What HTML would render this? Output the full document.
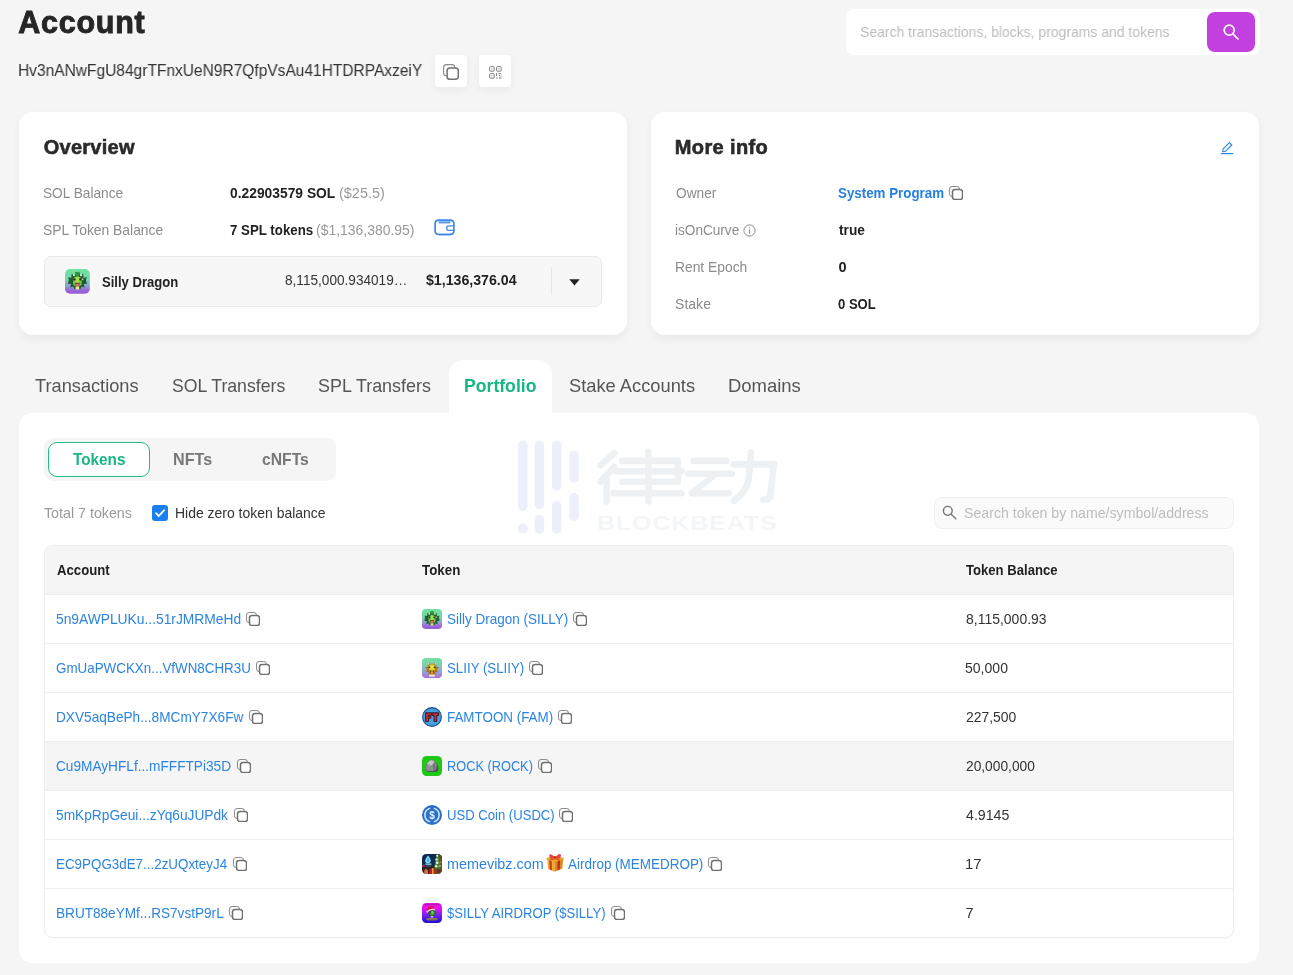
<!DOCTYPE html>
<html><head><meta charset="utf-8"><title>Account</title>
<style>
*{box-sizing:border-box;margin:0;padding:0}
html,body{width:1293px;height:975px;overflow:hidden;background:#f5f5f5}
body{position:relative;font-family:"Liberation Sans",sans-serif}
.a{position:absolute}
.t{position:absolute;white-space:nowrap;line-height:1;transform-origin:0 0}
.card{position:absolute;background:#fff;border-radius:14px;box-shadow:0 4px 9px rgba(0,0,0,.05),0 0 3px rgba(0,0,0,.025)}
.ibtn{position:absolute;width:31.6px;height:31.6px;background:#fff;border-radius:4px;box-shadow:0 3px 8px rgba(0,0,0,.05)}
.sep{position:absolute;left:45px;width:1188px;height:1px;background:#eeeeee}
.ic{position:absolute;width:20px;height:20px}
#w{position:absolute;left:0;top:0;width:1293px;height:975px;will-change:transform}
</style></head><body><div id="w">
<div class="a" style="left:846px;top:9px;width:414px;height:45.5px;background:#fff;border-radius:8px"></div>
<div class="a" style="left:1206.6px;top:11.8px;width:48.6px;height:40.2px;background:#c23fe0;border-radius:8px"></div>
<svg class="a" style="left:1221px;top:22px" width="20" height="20" viewBox="0 0 20 20" fill="none" stroke="#fff" stroke-width="1.7" stroke-linecap="round"><circle cx="8.2" cy="8.2" r="5"/><path d="M12 12 L17 17"/></svg>
<div class="ibtn" style="left:435.3px;top:55px"></div>
<div class="ibtn" style="left:479.4px;top:55px"></div>
<svg class="a" style="left:443px;top:63.9px" width="16" height="16" viewBox="0 0 16 16" fill="none"><rect x="0.6" y="0.6" width="11.2" height="11.2" rx="2.8" stroke="#8a8a8a" stroke-width="1.1"/><rect x="4.1" y="4.1" width="11.2" height="11.2" rx="2.8" fill="#fff" stroke="#707070" stroke-width="1.5"/></svg>
<svg class="a" style="left:488.6px;top:65.8px" width="13" height="13" viewBox="0 0 13 13" fill="none" stroke="#7a7a7a" stroke-width="1"><rect x="0.6" y="0.6" width="4.6" height="4.6" rx="0.8"/><rect x="7.6" y="0.6" width="4.6" height="4.6" rx="0.8"/><rect x="0.6" y="7.6" width="4.6" height="4.6" rx="0.8"/><rect x="2.4" y="2.4" width="1" height="1" fill="#7a7a7a" stroke="none"/><rect x="9.4" y="2.4" width="1" height="1" fill="#7a7a7a" stroke="none"/><rect x="2.4" y="9.4" width="1" height="1" fill="#7a7a7a" stroke="none"/><path d="M7.6 7.2 V10 M9.6 7.6 H12.2 M9.8 9.6 H11 M12 9.4 V10.6 M7.2 12 H8.6 M10 12 H12.4"/></svg>

<div class="card" style="left:19.3px;top:111.8px;width:607.8px;height:222.8px"></div>
<div class="card" style="left:650.8px;top:111.8px;width:608.2px;height:222.8px"></div>
<div class="a" style="left:44px;top:256.3px;width:557.7px;height:50.7px;background:#f7f7f7;border:1px solid #e9e9e9;border-radius:7px"></div>
<div class="a" style="left:551px;top:267px;width:1px;height:28px;background:#e6e6e6"></div>
<svg class="a" style="left:568.5px;top:278.6px" width="11" height="7" viewBox="0 0 11 7"><path d="M0.3 0.3 L10.7 0.3 L5.5 6.5 Z" fill="#222"/></svg>
<svg class="a" style="left:65.1px;top:269px" width="24.8" height="24.8" viewBox="0 0 20 20"><rect width="20" height="20" rx="4" fill="url(#gd1)"/><g transform="translate(0,-0.6)"><path d="M3.2 9.5 L2.6 7 L5 7.8 L5.4 4.4 L7.6 6 L8.6 2.8 L10 3.6 L11.4 2.8 L12.4 6 L14.6 4.4 L15 7.8 L17.6 7 L16.8 9.5 L17.8 12.4 L15.2 12.6 L15.8 15.6 L13.2 14.8 L12.6 16.8 L10 16.2 L7.4 16.8 L6.8 14.8 L4.2 15.6 L4.8 12.6 L2.2 12.4 Z" fill="#235a34"/><ellipse cx="10" cy="4.6" rx="2" ry="1.7" fill="#2f9a3c"/><path d="M6.4 8.4 Q10 4.6 13.6 8.4 L13.4 13.4 Q10 16.4 6.6 13.4 Z" fill="#6cc93c"/><ellipse cx="10" cy="9.4" rx="1.8" ry="2.6" fill="#a6e044"/><circle cx="7.2" cy="5.6" r="0.8" fill="#eef5e0"/><circle cx="12.9" cy="5.6" r="0.8" fill="#eef5e0"/><circle cx="7.6" cy="9" r="0.95" fill="#16321e"/><circle cx="12.4" cy="9" r="0.95" fill="#16321e"/><circle cx="14.3" cy="8.8" r="0.6" fill="#e6f2e0"/><path d="M8.2 11.6 H11.8 L11.4 14.4 H8.6 Z" fill="#8c2f3a"/><path d="M8.8 12.6 H11.2 L11 14.6 H9 Z" fill="#d4707a"/><rect x="8.6" y="14.8" width="2.8" height="2.4" rx="0.6" fill="#e8e68c"/></g></svg>
<svg class="a" style="left:433.6px;top:218.6px" width="21" height="17" viewBox="0 0 21 17" fill="none" stroke="#3f88e6" stroke-width="1.4"><rect x="1.2" y="1.2" width="18.6" height="14.3" rx="3.4" fill="#fff"/><rect x="4.6" y="1.6" width="11.6" height="1.6" fill="#86bcfa" stroke="none"/><path d="M4.6 3.8 H16.4" stroke="#2f78d6" stroke-width="1.1"/><path d="M19.8 6.9 H14.4 Q12.8 6.9 12.8 8.6 V9.6 Q12.8 11.4 14.4 11.4 H19.8" fill="#fff"/><rect x="1.2" y="1.2" width="18.6" height="14.3" rx="3.4"/></svg>
<svg class="a" style="left:742.6px;top:224.4px" width="13" height="13" viewBox="0 0 13 13" fill="none" stroke="#8a8a8a" stroke-width="1"><circle cx="6.5" cy="6.5" r="5.6"/><path d="M6.5 5.6 V9.6" stroke-width="1.1"/><circle cx="6.5" cy="3.8" r="0.65" fill="#8a8a8a" stroke="none"/></svg>
<svg class="a" style="left:1220px;top:141px" width="14" height="14" viewBox="0 0 14 14" fill="none" stroke="#2f86e8" stroke-width="1.1" stroke-linejoin="round"><path d="M3 8.2 L9.4 1.6 L11.8 4 L5.4 10.4 L2.8 10.8 Z"/><path d="M0.8 12.6 H13.4" stroke-width="1.2"/></svg>

<div class="a" style="left:449.2px;top:360px;width:103px;height:60px;background:#fff;border-radius:14px 14px 0 0"></div>
<div class="a" style="left:19.3px;top:413.3px;width:1239.7px;height:549.3px;background:#fff;border-radius:13px"></div>
<div class="a" style="left:44.1px;top:438.2px;width:292.4px;height:42.7px;background:#f5f5f5;border-radius:9px"></div>
<div class="a" style="left:48px;top:442.1px;width:101.8px;height:34.9px;background:#fff;border:1.4px solid #27b98b;border-radius:9px"></div>
<svg class="a" style="left:510px;top:436px" width="280" height="104" viewBox="510 436 280 104" fill="none">
<g fill="#edf0fb"><rect x="518" y="440.5" width="9.6" height="70.5" rx="4.8"/><circle cx="522.8" cy="528.6" r="5"/><rect x="534.6" y="440.5" width="9.6" height="68.5" rx="4.8"/><rect x="534.6" y="515" width="9.6" height="19" rx="4.8"/><rect x="552" y="440.5" width="9.6" height="50.5" rx="4.8"/><rect x="552" y="501" width="9.6" height="33" rx="4.8"/><rect x="569.2" y="450.5" width="9.6" height="32.5" rx="4.8"/><rect x="569.2" y="493" width="9.6" height="28" rx="4.8"/></g>
<g stroke="#eef1f4" stroke-width="6.6" stroke-linecap="round" stroke-linejoin="round">
<path d="M614.3 452.9 L600.4 465.4"/><path d="M614.3 466.8 L600.4 481.8"/><path d="M606.6 478.5 V501.6"/>
<path d="M622.3 460.9 H678 V481.8 H622.3"/><path d="M616.4 471.4 H681.5"/><path d="M613.6 493.3 H681.5"/><path d="M648.4 451.5 V501.6"/>
<path d="M693.6 460.9 H726.7"/><path d="M688.4 473.8 H732"/><path d="M714.5 474.8 L691.9 493.3 H728.5"/>
<path d="M733.7 464.4 H774 L770.2 496 Q769.6 500.4 763 499.6"/><path d="M751.1 452.2 L748.6 480 Q746 492 733.7 501"/>
</g></svg>

<div class="a" style="left:151.9px;top:505.3px;width:16px;height:16px;background:#1a7ff0;border-radius:3px"></div>
<svg class="a" style="left:151.9px;top:505.3px" width="16" height="16" viewBox="0 0 16 16" fill="none" stroke="#fff" stroke-width="1.8" stroke-linecap="round" stroke-linejoin="round"><path d="M4 8.2 L6.8 11 L12.2 5.2"/></svg>
<div class="a" style="left:933.9px;top:496.8px;width:299.8px;height:32.2px;background:#fafafa;border:1px solid #f0f0f0;border-radius:8px"></div>
<svg class="a" style="left:942px;top:505px" width="16" height="16" viewBox="0 0 16 16" fill="none" stroke="#757575" stroke-width="1.4" stroke-linecap="round"><circle cx="5.8" cy="5.8" r="4.4"/><path d="M9.2 9.2 L13.8 13.8"/></svg>
<div class="a" style="left:44.3px;top:545px;width:1189.5px;height:392.5px;background:#fff;border:1px solid #ececec;border-radius:8px;overflow:hidden">
 <div class="a" style="left:0;top:0;width:1190px;height:49px;background:#f5f5f5"></div>
 <div class="a" style="left:0;top:196px;width:1190px;height:49px;background:#f5f5f5"></div>
</div>
<div class="sep" style="top:594px"></div>
<div class="sep" style="top:643px"></div>
<div class="sep" style="top:692px"></div>
<div class="sep" style="top:741px"></div>
<div class="sep" style="top:790px"></div>
<div class="sep" style="top:839px"></div>
<div class="sep" style="top:888px"></div>
<svg width="0" height="0" style="position:absolute"><defs>
<linearGradient id="gd2" x1="0" y1="0" x2="0" y2="1"><stop offset="0" stop-color="#6fe09c"/><stop offset="0.35" stop-color="#82cdb4"/><stop offset="0.7" stop-color="#96a0d4"/><stop offset="1" stop-color="#a56fdc"/></linearGradient>
<linearGradient id="gd7" x1="0" y1="0" x2="0" y2="1"><stop offset="0" stop-color="#d815cf"/><stop offset="0.25" stop-color="#ea12ee"/><stop offset="0.6" stop-color="#7a22f0"/><stop offset="0.85" stop-color="#3312e6"/><stop offset="1" stop-color="#2a0cc0"/></linearGradient>
<linearGradient id="gd6" x1="0" y1="0" x2="0" y2="1"><stop offset="0" stop-color="#0b2a55"/><stop offset="0.55" stop-color="#12304a"/><stop offset="0.75" stop-color="#3a1a20"/><stop offset="1" stop-color="#7a1c1c"/></linearGradient>
<linearGradient id="gd1" x1="0" y1="0" x2="0" y2="1"><stop offset="0" stop-color="#6fe3a0"/><stop offset="0.42" stop-color="#76d6a8"/><stop offset="0.66" stop-color="#8aa6d2"/><stop offset="0.86" stop-color="#9866d8"/><stop offset="1" stop-color="#9b5cd8"/></linearGradient>
<clipPath id="rc"><rect width="20" height="20" rx="4.2"/></clipPath>
</defs></svg>
<svg class="ic" style="left:422.1px;top:609px" viewBox="0 0 20 20"><rect width="20" height="20" rx="4" fill="url(#gd1)"/><g transform="translate(0,-0.6)"><path d="M3.2 9.5 L2.6 7 L5 7.8 L5.4 4.4 L7.6 6 L8.6 2.8 L10 3.6 L11.4 2.8 L12.4 6 L14.6 4.4 L15 7.8 L17.6 7 L16.8 9.5 L17.8 12.4 L15.2 12.6 L15.8 15.6 L13.2 14.8 L12.6 16.8 L10 16.2 L7.4 16.8 L6.8 14.8 L4.2 15.6 L4.8 12.6 L2.2 12.4 Z" fill="#235a34"/><ellipse cx="10" cy="4.6" rx="2" ry="1.7" fill="#2f9a3c"/><path d="M6.4 8.4 Q10 4.6 13.6 8.4 L13.4 13.4 Q10 16.4 6.6 13.4 Z" fill="#6cc93c"/><ellipse cx="10" cy="9.4" rx="1.8" ry="2.6" fill="#a6e044"/><circle cx="7.2" cy="5.6" r="0.8" fill="#eef5e0"/><circle cx="12.9" cy="5.6" r="0.8" fill="#eef5e0"/><circle cx="7.6" cy="9" r="0.95" fill="#16321e"/><circle cx="12.4" cy="9" r="0.95" fill="#16321e"/><circle cx="14.3" cy="8.8" r="0.6" fill="#e6f2e0"/><path d="M8.2 11.6 H11.8 L11.4 14.4 H8.6 Z" fill="#8c2f3a"/><path d="M8.8 12.6 H11.2 L11 14.6 H9 Z" fill="#d4707a"/><rect x="8.6" y="14.8" width="2.8" height="2.4" rx="0.6" fill="#e8e68c"/></g></svg>
<svg class="ic" style="left:422.1px;top:658px" viewBox="0 0 20 20"><rect width="20" height="20" rx="4" fill="url(#gd2)"/><path d="M3 9.6 L5.6 8.6 L5.8 6.4 L7 7 L6.4 4.2 L8.4 6 L10 5.4 L11.6 6 L13.6 4.2 L13 7 L14.2 6.4 L14.4 8.6 L17 9.6 L14.8 11.4 L16 14 L13.6 14 L13.4 16.4 L10 17.4 L6.6 16.4 L6.4 14 L4 14 L5.2 11.4 Z" fill="#a8782a"/><path d="M6.6 4.2 L7.4 6.6 L6.2 6.2 Z M13.4 4.2 L12.6 6.6 L13.8 6.2 Z" fill="#f4f4ec"/><path d="M6.6 8 Q10 4.4 13.4 8 L13 12.2 Q10 14.4 7 12.2 Z" fill="#e4d422"/><ellipse cx="10" cy="8.8" rx="1.5" ry="2.4" fill="#f0e436"/><path d="M9.2 6 L10 7.4 L10.8 6 Z" fill="#7ab02c"/><circle cx="7.4" cy="9.2" r="1" fill="#2a2a18"/><circle cx="12.6" cy="9.2" r="1" fill="#2a2a18"/><circle cx="7" cy="8.8" r="0.45" fill="#fff"/><circle cx="12.2" cy="8.8" r="0.45" fill="#fff"/><path d="M7.6 12.6 H12.4 L11.6 15 H8.4 Z" fill="#7a4418"/><rect x="8.9" y="13.2" width="2.2" height="2" rx="0.4" fill="#f2a034"/><path d="M6.8 17 Q10 15.4 13.2 17 L13 18.8 H7 Z" fill="#f0dcc4"/></svg>
<svg class="ic" style="left:422.1px;top:707px" viewBox="0 0 20 20"><circle cx="10" cy="10" r="9.4" fill="#46a0dc" stroke="#1d4a8c" stroke-width="1.1"/><g fill="#c62c2a" stroke="#2c1030" stroke-width="0.9" stroke-linejoin="round"><path d="M3.6 5.8 H9.6 V8.2 H6.6 V9.4 H8.8 V11.2 H6.6 V14.4 H3.6 Z"/><path d="M10.2 5.8 H16.6 V8.4 H14.8 V14.4 H12 V8.4 H10.2 Z"/></g></svg>
<svg class="ic" style="left:422.1px;top:756px" viewBox="0 0 20 20"><rect width="20" height="20" rx="4.6" fill="#1fc716"/><path d="M3.2 13.4 L4.6 7.4 L8.2 4.2 L12.4 4.6 L15.4 8 L16.6 13 L15 15.8 L6 16 Z" fill="#4e5058"/><path d="M3.4 13 L4.8 7.4 L8.2 4.2 L12.2 4.6 L14.6 8.2 L14.2 13 L11 15 L5.6 15 Z" fill="#8e9092"/><path d="M5 7.6 L8.2 4.3 L12 4.7 L11 8.6 L7 10 Z" fill="#c4c6c4"/><path d="M10.6 8.8 L12.4 7 L13.4 12.6 L11.4 13.8 Z" fill="#6c6e74"/><path d="M6.4 8.4 L7.4 8 L7.2 9.6 Z" fill="#50545a"/></svg>
<svg class="ic" style="left:422.1px;top:805px" viewBox="0 0 20 20"><circle cx="10" cy="10" r="10" fill="#2a70c6"/><g fill="none" stroke="#d6e8ff" stroke-width="1.5" stroke-linecap="round"><path d="M7.6 3.4 A7 7 0 0 0 7.6 16.6"/><path d="M12.4 3.4 A7 7 0 0 1 12.4 16.6"/></g><text x="10" y="13.6" text-anchor="middle" font-family="Liberation Sans, sans-serif" font-weight="700" font-size="10" fill="#e2efff">$</text></svg>
<svg class="ic" style="left:422.1px;top:854px" viewBox="0 0 20 20"><g clip-path="url(#rc)"><rect width="20" height="20" fill="url(#gd6)"/><path d="M11 20 L14.6 0 L20 0 L20 20 Z" fill="#3c6a2c"/><path d="M12.6 12 L15 1 L19.4 6 L20 16 Z" fill="#4f8434"/><path d="M16.6 0.4 L20 0.4 L20 20 L18.4 20 Z" fill="#5a3a22" opacity="0.5"/><circle cx="15.2" cy="1.8" r="1.1" fill="#e8efe0"/><circle cx="14.6" cy="5.4" r="1.2" fill="#e4ecdc"/><circle cx="15.2" cy="8.8" r="1.3" fill="#eef2ea"/><circle cx="14.2" cy="12.2" r="1.3" fill="#e6eed8"/><circle cx="18" cy="12" r="0.9" fill="#c8b070"/><circle cx="18.4" cy="8.2" r="0.8" fill="#b89858"/><path d="M6 1.4 Q9.6 5.6 8.6 7.8 Q7.6 9.4 6 9.4 Q4.2 9.4 3.3 7.8 Q2.4 5.6 6 1.4 Z" fill="#7fd8f6"/><path d="M6 3.6 Q7.6 6 6.6 7.4 Q5.4 8.2 4.8 6.8 Z" fill="#3aa8e0"/><rect x="3.2" y="9.6" width="6.4" height="1.1" rx="0.4" fill="#9adcf0"/><rect x="4.2" y="11.6" width="4.4" height="0.7" fill="#5a8aa0"/><path d="M0 11 L2.4 10.4 L3 12.6 L0 13 Z" fill="#b02860"/><path d="M7.6 15.2 Q10.6 12.6 14 15.4 L14.4 20 L7.4 20 Z" fill="#c2201c"/><path d="M10.2 14 L11.4 14 L11.6 20 L10.2 20 Z" fill="#e8c040"/><path d="M2.4 16.4 L4 14.6 L5.8 16.4 L6 20 L2 20 Z" fill="#c87848"/><circle cx="16.6" cy="17" r="1.8" fill="#8a1c28"/></g></svg>
<svg class="ic" style="left:422.1px;top:903px" viewBox="0 0 20 20"><rect width="20" height="20" rx="4.4" fill="url(#gd7)"/><path d="M2.6 1.6 H17.4" stroke="#a010a8" stroke-width="1" stroke-dasharray="1.4 0.8"/><ellipse cx="10" cy="10.2" rx="3.6" ry="3.4" fill="#1f4a2a"/><ellipse cx="10.2" cy="10" rx="2.7" ry="2.6" fill="#3f9a44"/><ellipse cx="10.4" cy="9.4" rx="1.1" ry="1.3" fill="#6ed064"/><circle cx="8.3" cy="9" r="0.8" fill="#14241a"/><path d="M5.2 7.2 Q5.4 3.4 8.8 3 Q11.6 3 12.2 5.4 Q9 4.8 6.6 7.6 Z" fill="#e0123c"/><path d="M5.4 8 Q8.6 4.6 13 6.2 L13.4 7.4 Q9.4 6.2 6 9 Z" fill="#f6d8d4"/><circle cx="5.2" cy="8.8" r="0.9" fill="#f0c8e8"/><rect x="8.6" y="13.2" width="2.8" height="1.3" rx="0.5" fill="#e8e8f0"/><rect x="4.4" y="15.2" width="11.2" height="1.5" rx="0.4" fill="#a48c28"/><rect x="5.4" y="17.2" width="9" height="0.8" fill="#6a4a90"/></svg>
<svg class="a" style="left:546px;top:853.6px" width="18.4" height="18.4" viewBox="0 0 18 18"><path d="M0.6 4 L9 1.6 L17.4 4 L17.2 6 L9 8.4 L0.8 6 Z" fill="#e8a62c"/><path d="M1.4 5.8 L8.2 7.8 L8.2 17.4 L2 14.4 Z" fill="#eeb02a"/><path d="M8.2 7.8 L16.6 5.6 L16 14.2 L8.2 17.4 Z" fill="#d98a1e"/><path d="M3.2 6.2 L5.6 6.9 L5.8 16.2 L3.6 15.2 Z" fill="#d23a22"/><path d="M11.4 6.9 L13.8 6.3 L13.4 15.2 L11.2 16.2 Z" fill="#c32c1c"/><path d="M3 3.4 L5.6 2.6 L14.4 5 L11.6 5.8 Z M14.6 3.4 L12.2 2.6 L3.4 5 L6 5.8 Z" fill="#d63a26"/><path d="M8.8 3.9 Q5 -1.4 3.2 0.9 Q2.2 3.9 8.8 3.9 Z M8.8 3.9 Q13 -1.6 14.6 0.9 Q15.6 3.9 8.8 3.9 Z" fill="#ea4444"/><circle cx="8.8" cy="3.5" r="1.2" fill="#b82420"/></svg>

<svg class="a" style="left:246.2px;top:612.1px" width="14" height="14" viewBox="0 0 14 14" fill="none"><rect x="0.5" y="0.5" width="10" height="10" rx="2.6" stroke="#8a8a8a" stroke-width="1"/><rect x="3.5" y="3.4" width="10" height="10.1" rx="2.6" fill="#fff" stroke="#707070" stroke-width="1.5"/></svg>
<svg class="a" style="left:573.2px;top:612.1px" width="14" height="14" viewBox="0 0 14 14" fill="none"><rect x="0.5" y="0.5" width="10" height="10" rx="2.6" stroke="#8a8a8a" stroke-width="1"/><rect x="3.5" y="3.4" width="10" height="10.1" rx="2.6" fill="#fff" stroke="#707070" stroke-width="1.5"/></svg>
<svg class="a" style="left:256.1px;top:661.1px" width="14" height="14" viewBox="0 0 14 14" fill="none"><rect x="0.5" y="0.5" width="10" height="10" rx="2.6" stroke="#8a8a8a" stroke-width="1"/><rect x="3.5" y="3.4" width="10" height="10.1" rx="2.6" fill="#fff" stroke="#707070" stroke-width="1.5"/></svg>
<svg class="a" style="left:529.3px;top:661.1px" width="14" height="14" viewBox="0 0 14 14" fill="none"><rect x="0.5" y="0.5" width="10" height="10" rx="2.6" stroke="#8a8a8a" stroke-width="1"/><rect x="3.5" y="3.4" width="10" height="10.1" rx="2.6" fill="#fff" stroke="#707070" stroke-width="1.5"/></svg>
<svg class="a" style="left:249.1px;top:710.1px" width="14" height="14" viewBox="0 0 14 14" fill="none"><rect x="0.5" y="0.5" width="10" height="10" rx="2.6" stroke="#8a8a8a" stroke-width="1"/><rect x="3.5" y="3.4" width="10" height="10.1" rx="2.6" fill="#fff" stroke="#707070" stroke-width="1.5"/></svg>
<svg class="a" style="left:558.2px;top:710.1px" width="14" height="14" viewBox="0 0 14 14" fill="none"><rect x="0.5" y="0.5" width="10" height="10" rx="2.6" stroke="#8a8a8a" stroke-width="1"/><rect x="3.5" y="3.4" width="10" height="10.1" rx="2.6" fill="#fff" stroke="#707070" stroke-width="1.5"/></svg>
<svg class="a" style="left:236.6px;top:759.1px" width="14" height="14" viewBox="0 0 14 14" fill="none"><rect x="0.5" y="0.5" width="10" height="10" rx="2.6" stroke="#8a8a8a" stroke-width="1"/><rect x="3.5" y="3.4" width="10" height="10.1" rx="2.6" fill="#fff" stroke="#707070" stroke-width="1.5"/></svg>
<svg class="a" style="left:538.1px;top:759.1px" width="14" height="14" viewBox="0 0 14 14" fill="none"><rect x="0.5" y="0.5" width="10" height="10" rx="2.6" stroke="#8a8a8a" stroke-width="1"/><rect x="3.5" y="3.4" width="10" height="10.1" rx="2.6" fill="#fff" stroke="#707070" stroke-width="1.5"/></svg>
<svg class="a" style="left:233.6px;top:808.1px" width="14" height="14" viewBox="0 0 14 14" fill="none"><rect x="0.5" y="0.5" width="10" height="10" rx="2.6" stroke="#8a8a8a" stroke-width="1"/><rect x="3.5" y="3.4" width="10" height="10.1" rx="2.6" fill="#fff" stroke="#707070" stroke-width="1.5"/></svg>
<svg class="a" style="left:559.4px;top:808.1px" width="14" height="14" viewBox="0 0 14 14" fill="none"><rect x="0.5" y="0.5" width="10" height="10" rx="2.6" stroke="#8a8a8a" stroke-width="1"/><rect x="3.5" y="3.4" width="10" height="10.1" rx="2.6" fill="#fff" stroke="#707070" stroke-width="1.5"/></svg>
<svg class="a" style="left:232.5px;top:857.1px" width="14" height="14" viewBox="0 0 14 14" fill="none"><rect x="0.5" y="0.5" width="10" height="10" rx="2.6" stroke="#8a8a8a" stroke-width="1"/><rect x="3.5" y="3.4" width="10" height="10.1" rx="2.6" fill="#fff" stroke="#707070" stroke-width="1.5"/></svg>
<svg class="a" style="left:229.0px;top:906.1px" width="14" height="14" viewBox="0 0 14 14" fill="none"><rect x="0.5" y="0.5" width="10" height="10" rx="2.6" stroke="#8a8a8a" stroke-width="1"/><rect x="3.5" y="3.4" width="10" height="10.1" rx="2.6" fill="#fff" stroke="#707070" stroke-width="1.5"/></svg>
<svg class="a" style="left:610.6px;top:906.1px" width="14" height="14" viewBox="0 0 14 14" fill="none"><rect x="0.5" y="0.5" width="10" height="10" rx="2.6" stroke="#8a8a8a" stroke-width="1"/><rect x="3.5" y="3.4" width="10" height="10.1" rx="2.6" fill="#fff" stroke="#707070" stroke-width="1.5"/></svg>
<svg class="a" style="left:708.2px;top:857.1px" width="14" height="14" viewBox="0 0 14 14" fill="none"><rect x="0.5" y="0.5" width="10" height="10" rx="2.6" stroke="#8a8a8a" stroke-width="1"/><rect x="3.5" y="3.4" width="10" height="10.1" rx="2.6" fill="#fff" stroke="#707070" stroke-width="1.5"/></svg>
<svg class="a" style="left:949.2px;top:186.3px" width="14" height="14" viewBox="0 0 14 14" fill="none"><rect x="0.5" y="0.5" width="10" height="10" rx="2.6" stroke="#8a8a8a" stroke-width="1"/><rect x="3.5" y="3.4" width="10" height="10.1" rx="2.6" fill="#fff" stroke="#707070" stroke-width="1.5"/></svg>
<span class="t" style="left:18.35px;top:7.00px;font-size:30.5px;font-weight:700;color:#262626;letter-spacing:0.733px;-webkit-text-stroke:0.9px #262626;">Account</span>
<span class="t" style="left:18.38px;top:62.00px;font-size:16.4px;font-weight:400;color:#333;transform:scaleX(0.9469);">Hv3nANwFgU84grTFnxUeN9R7QfpVsAu41HTDRPAxzeiY</span>
<span class="t" style="left:860.33px;top:25.00px;font-size:14.5px;font-weight:400;color:#bdbdbd;transform:scaleX(0.9625);">Search transactions, blocks, programs and tokens</span>
<span class="t" style="left:43.70px;top:137.00px;font-size:20px;font-weight:700;color:#2a2a2a;letter-spacing:0.264px;-webkit-text-stroke:0.6px #2a2a2a;">Overview</span>
<span class="t" style="left:43.38px;top:186.00px;font-size:14.5px;font-weight:400;color:#8c8c8c;transform:scaleX(0.9431);">SOL Balance</span>
<span class="t" style="left:43.35px;top:223.00px;font-size:14.5px;font-weight:400;color:#8c8c8c;transform:scaleX(0.9559);">SPL Token Balance</span>
<span class="t" style="left:229.72px;top:186.00px;font-size:14.5px;font-weight:700;color:#222222;transform:scaleX(0.9534);">0.22903579 SOL</span>
<span class="t" style="left:338.50px;top:186.00px;font-size:14.5px;font-weight:400;color:#999999;transform:scaleX(0.9977);">($25.5)</span>
<span class="t" style="left:229.51px;top:223.00px;font-size:14.5px;font-weight:700;color:#222222;transform:scaleX(0.9162);">7 SPL tokens</span>
<span class="t" style="left:315.54px;top:223.00px;font-size:14.5px;font-weight:400;color:#999999;transform:scaleX(0.9622);">($1,136,380.95)</span>
<span class="t" style="left:101.75px;top:275.00px;font-size:14.5px;font-weight:700;color:#222222;transform:scaleX(0.9009);">Silly Dragon</span>
<span class="t" style="left:285.12px;top:273.00px;font-size:14.5px;font-weight:400;color:#333;transform:scaleX(0.9385);">8,115,000.934019…</span>
<span class="t" style="left:425.96px;top:273.00px;font-size:14.5px;font-weight:700;color:#222222;transform:scaleX(0.9762);">$1,136,376.04</span>
<span class="t" style="left:674.80px;top:137.00px;font-size:20px;font-weight:700;color:#2a2a2a;letter-spacing:0.369px;-webkit-text-stroke:0.6px #2a2a2a;">More info</span>
<span class="t" style="left:675.80px;top:186.00px;font-size:14.5px;font-weight:400;color:#8c8c8c;transform:scaleX(0.9452);">Owner</span>
<span class="t" style="left:675.26px;top:223.00px;font-size:14.5px;font-weight:400;color:#8c8c8c;transform:scaleX(0.9378);">isOnCurve</span>
<span class="t" style="left:675.01px;top:260.00px;font-size:14.5px;font-weight:400;color:#8c8c8c;transform:scaleX(0.9537);">Rent Epoch</span>
<span class="t" style="left:674.98px;top:297.00px;font-size:14.5px;font-weight:400;color:#8c8c8c;transform:scaleX(0.9706);">Stake</span>
<span class="t" style="left:838.38px;top:186.00px;font-size:14.5px;font-weight:700;color:#2480e2;transform:scaleX(0.9201);">System Program</span>
<span class="t" style="left:838.55px;top:223.00px;font-size:14.5px;font-weight:700;color:#222222;transform:scaleX(0.9454);">true</span>
<span class="t" style="left:838.50px;top:260.00px;font-size:14.5px;font-weight:700;color:#222222;letter-spacing:0.000px;">0</span>
<span class="t" style="left:838.17px;top:297.00px;font-size:14.5px;font-weight:700;color:#222222;transform:scaleX(0.8996);">0 SOL</span>
<span class="t" style="left:35.11px;top:377.00px;font-size:18.5px;font-weight:400;color:#555;transform:scaleX(0.9846);">Transactions</span>
<span class="t" style="left:172.30px;top:377.00px;font-size:18.5px;font-weight:400;color:#555;transform:scaleX(0.9548);">SOL Transfers</span>
<span class="t" style="left:318.38px;top:377.00px;font-size:18.5px;font-weight:400;color:#555;transform:scaleX(0.9691);">SPL Transfers</span>
<span class="t" style="left:464.31px;top:377.00px;font-size:18.5px;font-weight:700;color:#1ab587;transform:scaleX(0.9527);">Portfolio</span>
<span class="t" style="left:569.25px;top:377.00px;font-size:18.5px;font-weight:400;color:#555;transform:scaleX(0.9883);">Stake Accounts</span>
<span class="t" style="left:727.97px;top:377.00px;font-size:18.5px;font-weight:400;color:#555;transform:scaleX(0.9980);">Domains</span>
<span class="t" style="left:72.67px;top:451.00px;font-size:16.4px;font-weight:700;color:#1ab587;transform:scaleX(0.9339);">Tokens</span>
<span class="t" style="left:173.09px;top:451.00px;font-size:16.4px;font-weight:700;color:#777;transform:scaleX(0.9854);">NFTs</span>
<span class="t" style="left:261.78px;top:451.00px;font-size:16.4px;font-weight:700;color:#777;transform:scaleX(0.9579);">cNFTs</span>
<span class="t" style="left:43.85px;top:506.00px;font-size:14.5px;font-weight:400;color:#999999;transform:scaleX(0.9825);">Total 7 tokens</span>
<span class="t" style="left:174.90px;top:506.00px;font-size:14.5px;font-weight:400;color:#333;transform:scaleX(0.9625);">Hide zero token balance</span>
<span class="t" style="left:964.38px;top:506.00px;font-size:14.5px;font-weight:400;color:#bdbdbd;transform:scaleX(0.9759);">Search token by name/symbol/address</span>
<span class="t" style="left:56.75px;top:563.00px;font-size:14.5px;font-weight:700;color:#1f1f1f;transform:scaleX(0.9083);">Account</span>
<span class="t" style="left:421.99px;top:563.00px;font-size:14.5px;font-weight:700;color:#1f1f1f;transform:scaleX(0.9196);">Token</span>
<span class="t" style="left:966.27px;top:563.00px;font-size:14.5px;font-weight:700;color:#1f1f1f;transform:scaleX(0.9035);">Token Balance</span>
<span class="t" style="left:596.78px;top:514.00px;font-size:19.5px;font-weight:700;color:#f3f5f8;transform:scaleX(1.2895);letter-spacing:0.6px;">BLOCKBEATS</span>
<span class="t" style="left:56.13px;top:612.00px;font-size:14.5px;font-weight:400;color:#2c84e2;transform:scaleX(0.9517);">5n9AWPLUKu...51rJMRMeHd</span>
<span class="t" style="left:446.90px;top:612.00px;font-size:14.5px;font-weight:400;color:#2c84e2;transform:scaleX(0.9315);">Silly Dragon (SILLY)</span>
<span class="t" style="left:965.58px;top:612.00px;font-size:14.5px;font-weight:400;color:#333;transform:scaleX(0.9641);">8,115,000.93</span>
<span class="t" style="left:56.48px;top:661.00px;font-size:14.5px;font-weight:400;color:#2c84e2;transform:scaleX(0.9233);">GmUaPWCKXn...VfWN8CHR3U</span>
<span class="t" style="left:446.91px;top:661.00px;font-size:14.5px;font-weight:400;color:#2c84e2;transform:scaleX(0.9160);">SLIIY (SLIIY)</span>
<span class="t" style="left:965.15px;top:661.00px;font-size:14.5px;font-weight:400;color:#333;transform:scaleX(0.9684);">50,000</span>
<span class="t" style="left:56.02px;top:710.00px;font-size:14.5px;font-weight:400;color:#2c84e2;transform:scaleX(0.9411);">DXV5aqBePh...8MCmY7X6Fw</span>
<span class="t" style="left:447.37px;top:710.00px;font-size:14.5px;font-weight:400;color:#2c84e2;transform:scaleX(0.9236);">FAMTOON (FAM)</span>
<span class="t" style="left:965.69px;top:710.00px;font-size:14.5px;font-weight:400;color:#333;transform:scaleX(0.9594);">227,500</span>
<span class="t" style="left:56.45px;top:759.00px;font-size:14.5px;font-weight:400;color:#2c84e2;transform:scaleX(0.9418);">Cu9MAyHFLf...mFFFTPi35D</span>
<span class="t" style="left:447.35px;top:759.00px;font-size:14.5px;font-weight:400;color:#2c84e2;transform:scaleX(0.8812);">ROCK (ROCK)</span>
<span class="t" style="left:965.71px;top:759.00px;font-size:14.5px;font-weight:400;color:#333;transform:scaleX(0.9486);">20,000,000</span>
<span class="t" style="left:56.37px;top:808.00px;font-size:14.5px;font-weight:400;color:#2c84e2;transform:scaleX(0.9469);">5mKpRpGeui...zYq6uJUPdk</span>
<span class="t" style="left:446.70px;top:808.00px;font-size:14.5px;font-weight:400;color:#2c84e2;transform:scaleX(0.9032);">USD Coin (USDC)</span>
<span class="t" style="left:966.04px;top:808.00px;font-size:14.5px;font-weight:400;color:#333;transform:scaleX(0.9785);">4.9145</span>
<span class="t" style="left:56.21px;top:857.00px;font-size:14.5px;font-weight:400;color:#2c84e2;transform:scaleX(0.9231);">EC9PQG3dE7...2zUQxteyJ4</span>
<span class="t" style="left:965.46px;top:857.00px;font-size:14.5px;font-weight:400;color:#333;transform:scaleX(1.0233);">17</span>
<span class="t" style="left:56.11px;top:906.00px;font-size:14.5px;font-weight:400;color:#2c84e2;transform:scaleX(0.9374);">BRUT88eYMf...RS7vstP9rL</span>
<span class="t" style="left:447.41px;top:906.00px;font-size:14.5px;font-weight:400;color:#2c84e2;transform:scaleX(0.9037);">$SILLY AIRDROP ($SILLY)</span>
<span class="t" style="left:965.55px;top:906.00px;font-size:14.5px;font-weight:400;color:#333;letter-spacing:0.000px;">7</span>
<span class="t" style="left:446.61px;top:857.00px;font-size:14.5px;font-weight:400;color:#2c84e2;transform:scaleX(0.9916);">memevibz.com</span>
<span class="t" style="left:567.54px;top:857.00px;font-size:14.5px;font-weight:400;color:#2c84e2;transform:scaleX(0.9281);">Airdrop (MEMEDROP)</span>
</div></body></html>
